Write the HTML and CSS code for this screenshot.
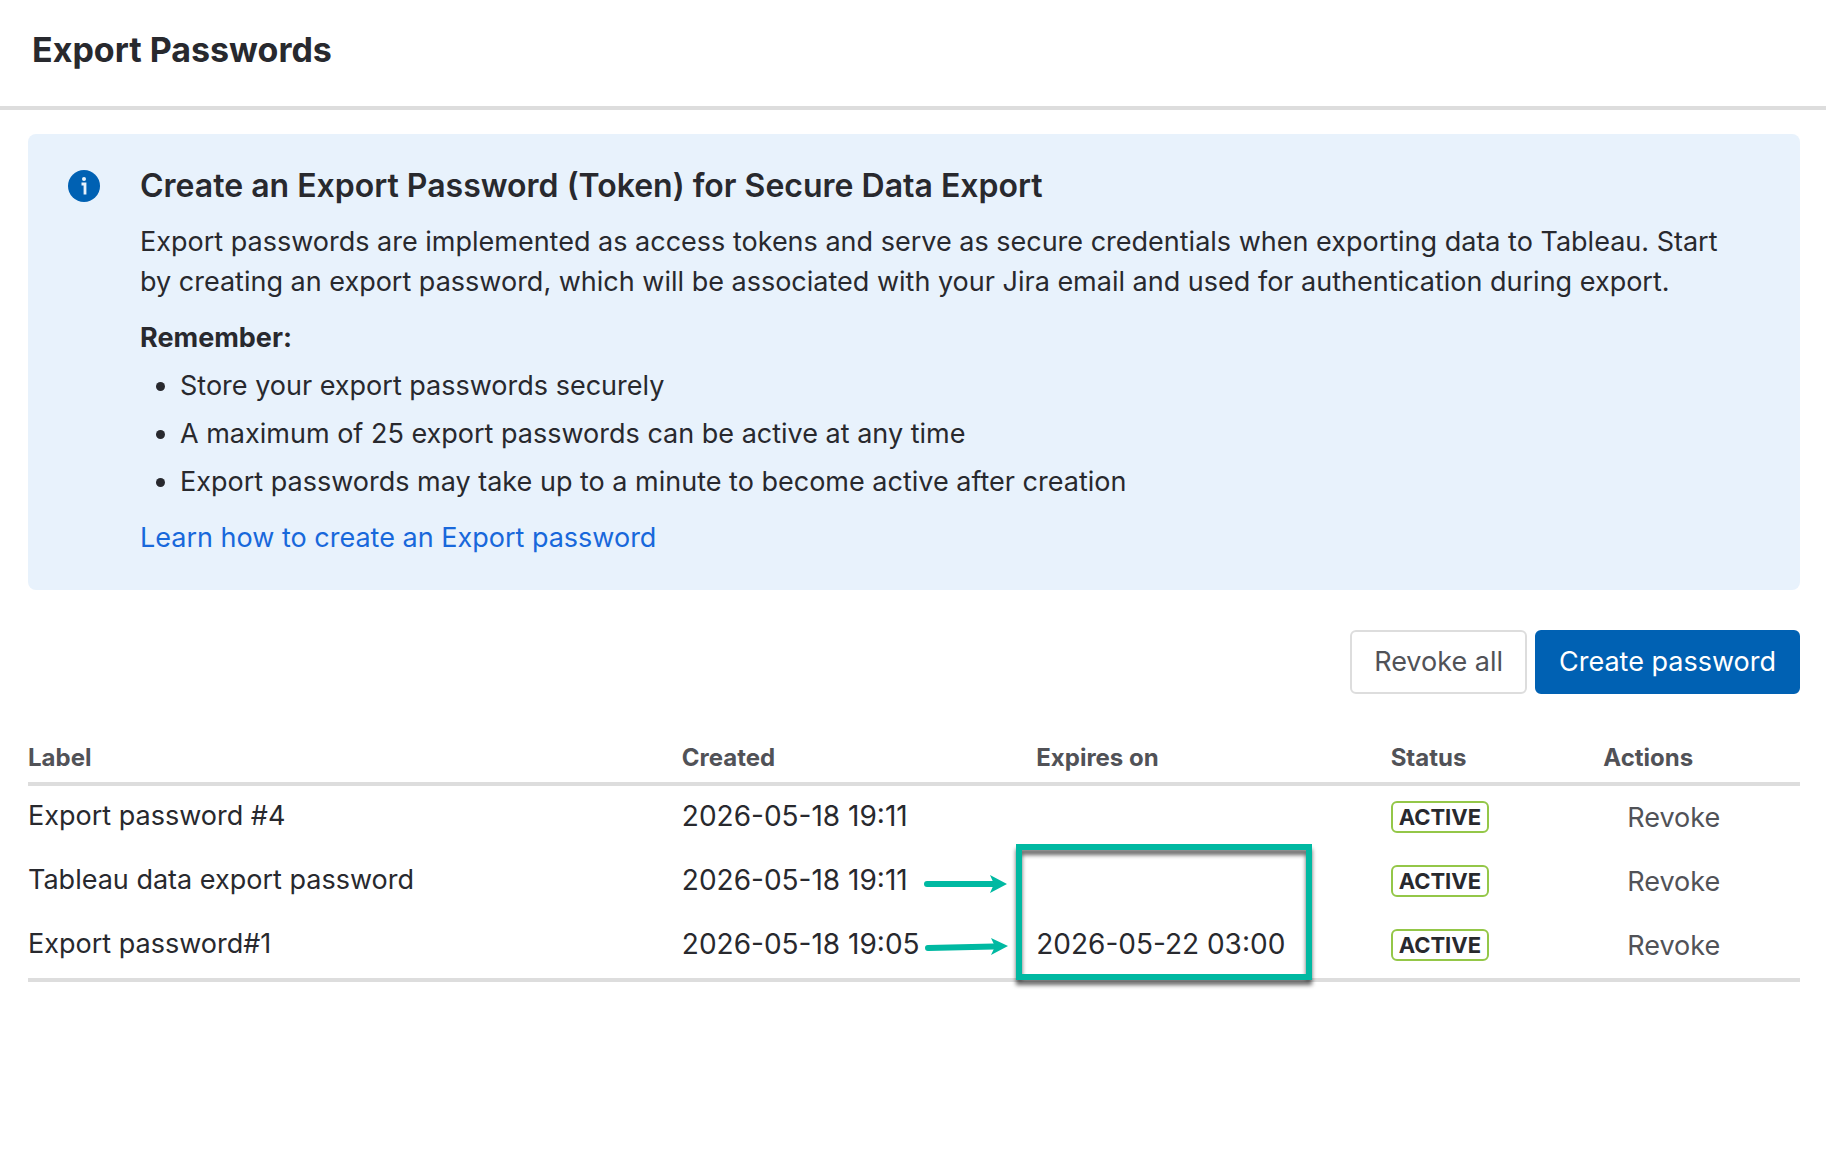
FILE: index.html
```
<!DOCTYPE html>
<html lang="en">

<head>
	<meta charset="utf-8">
	<title>Export Passwords</title>
	<link rel="stylesheet" href="styles.css">
</head>

<body>
	<header class="page-header">
		<h1>Export Passwords</h1>
	</header>

	<main class="content">
		<section class="info">
			<svg class="info-icon" viewBox="0 0 32 32" aria-hidden="true">
				<circle cx="16" cy="16" r="16" fill="#0061b3"/>
				<circle cx="16" cy="9" r="2" fill="#e8f2fc"/>
				<path d="M13.5 14h3.5v10.5" fill="none" stroke="#e8f2fc" stroke-width="2.8"/>
			</svg>
			<div class="info-body">
				<h2>Create an Export Password (Token) for Secure Data Export</h2>
				<p>Export passwords are implemented as access tokens and serve as secure credentials when exporting data to Tableau. Start by creating an export password, which will be associated with your Jira email and used for authentication during export.</p>
				<p class="remember">Remember:</p>
				<ul>
					<li>Store your export passwords securely</li>
					<li>A maximum of 25 export passwords can be active at any time</li>
					<li>Export passwords may take up to a minute to become active after creation</li>
				</ul>
				<p><a href="#">Learn how to create an Export password</a></p>
			</div>
		</section>

		<div class="toolbar">
			<button type="button" class="btn">Revoke all</button>
			<button type="button" class="btn btn-primary">Create password</button>
		</div>

		<table class="passwords">
			<thead>
				<tr>
					<th class="col-label">Label</th>
					<th class="col-date">Created</th>
					<th class="col-date">Expires on</th>
					<th class="col-status">Status</th>
					<th>Actions</th>
				</tr>
			</thead>
			<tbody>
				<tr>
					<td>Export password #4</td>
					<td class="date">2026-05-18 19:11</td>
					<td class="date"></td>
					<td><span class="badge">ACTIVE</span></td>
					<td><button type="button" class="btn-link">Revoke</button></td>
				</tr>
				<tr>
					<td>Tableau data export password</td>
					<td class="date">
						2026-05-18 19:11
						<svg class="arrow" viewBox="0 0 84 20" aria-hidden="true">
							<path d="M3 10H70" stroke="#00b9a2" stroke-width="6" stroke-linecap="round"/>
							<path d="M66 1L83 10L66 19L70 10Z" fill="#00b9a2"/>
						</svg>
					</td>
					<td class="date"></td>
					<td><span class="badge">ACTIVE</span></td>
					<td><button type="button" class="btn-link">Revoke</button></td>
				</tr>
				<tr>
					<td>Export password#1</td>
					<td class="date">
						2026-05-18 19:05
						<svg class="arrow" viewBox="0 0 84 20" aria-hidden="true">
							<path d="M4 10L70 8.5" stroke="#00b9a2" stroke-width="6" stroke-linecap="round"/>
							<path d="M67 0L84 8L67 17L71 8.5Z" fill="#00b9a2"/>
						</svg>
					</td>
					<td class="date">2026-05-22 03:00<div class="highlight"></div></td>
					<td><span class="badge">ACTIVE</span></td>
					<td><button type="button" class="btn-link">Revoke</button></td>
				</tr>
			</tbody>
		</table>
	</main>
</body>

</html>
```
FILE: styles.css
```
* {
	box-sizing: border-box;
}

body {
	margin: 0;
	background: #fff;
	color: #28292e;
	font-family: Inter, "Liberation Sans", sans-serif;
	font-size: 27px;
	line-height: 40px;
}

h1, h2, p, ul {
	margin: 0;
}

.page-header {
	padding: 28px 32px 34px;
	border-bottom: 4px solid #ddd;
}

.page-header h1 {
	font-size: 34px;
	line-height: 44px;
	font-weight: 700;
}

.content {
	padding: 24px 26px 24px 28px;
}

.info {
	display: flex;
	gap: 40px;
	padding: 32px 64px 32px 40px;
	border-radius: 8px;
	background: #e8f2fc;
}

.info-icon {
	flex: none;
	width: 32px;
	height: 32px;
	margin-top: 4px;
}

.info-body h2 {
	font-size: 32px;
	line-height: 40px;
	font-weight: 600;
}

.info-body p {
	margin-top: 16px;
}

.info-body .remember {
	font-weight: 700;
}

.info-body ul {
	padding-left: 40px;
}

.info-body li {
	margin-top: 8px;
}

.info-body a {
	color: #1868db;
	text-decoration: none;
}

.toolbar {
	display: flex;
	justify-content: flex-end;
	gap: 8px;
	margin-top: 40px;
}

.btn {
	height: 64px;
	padding: 0 22px;
	border: 2px solid #ddd;
	border-radius: 6px;
	background: #fff;
	color: #515257;
	font: inherit;
}

.btn-primary {
	border-color: #0061b3;
	background: #0061b3;
	color: #fff;
}

.passwords {
	width: 100%;
	margin-top: 44px;
	border-collapse: separate;
	border-spacing: 0;
	border-bottom: 4px solid #ddd;
	table-layout: fixed;
}

.passwords th {
	padding: 0 0 4px;
	border-bottom: 4px solid #ddd;
	color: #515257;
	font-size: 24px;
	font-weight: 700;
	text-align: left;
}

.col-label {
	width: 36.9%;
}

.col-date {
	width: 20%;
}

.col-status {
	width: 12%;
}

.passwords td {
	position: relative;
	height: 64px;
	padding: 0 0 4px;
	vertical-align: middle;
	white-space: nowrap;
}

.passwords .date {
	font-size: 28px;
}

.badge {
	display: block;
	width: fit-content;
	margin-top: 2px;
	padding: 0 6px;
	border: 2px solid #94c748;
	border-radius: 6px;
	font-size: 22px;
	line-height: 28px;
	font-weight: 700;
}

.btn-link {
	display: block;
	margin-top: 4px;
	padding: 0 24px;
	border: 0;
	background: none;
	color: #515257;
	font: inherit;
}

/* callout over the expiry dates */
.arrow {
	position: absolute;
	left: 242px;
	top: 24px;
	width: 84px;
	height: 20px;
	fill: none;
	overflow: visible;
}

.highlight {
	position: absolute;
	left: -20px;
	top: -70px;
	width: 296px;
	height: 136px;
	border: 6px solid #00b9a2;
	filter: drop-shadow(0 5px 2px rgba(0, 0, 0, 0.6));
}
```
